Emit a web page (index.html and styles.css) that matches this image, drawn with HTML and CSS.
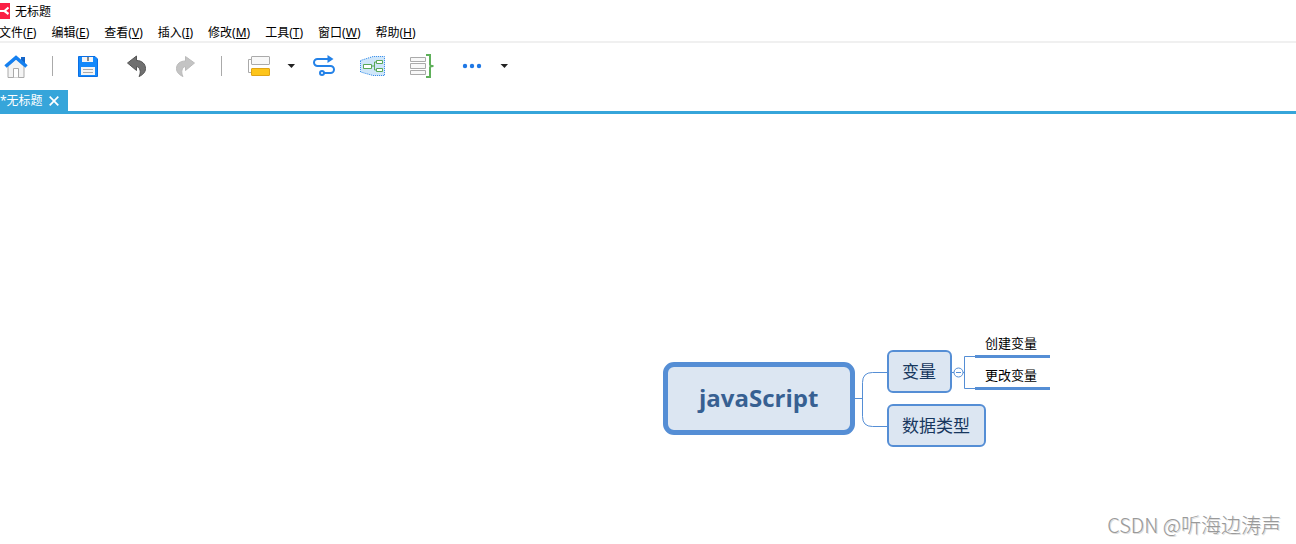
FILE: index.html
```html
<!DOCTYPE html>
<html lang="zh-CN">
<head>
<meta charset="utf-8">
<title>无标题</title>
<link rel="stylesheet" href="styles.css">
</head>
<body>
<header class="titlebar">
  <svg class="app-icon" width="10" height="16" viewBox="0 0 10 16" aria-hidden="true">
    <rect width="10" height="16" fill="#fb1f45"/>
    <path d="M0 8H4.500L8.500 4.500M4.500 8L8.500 11" fill="none" stroke="#fff" stroke-width="2.200"/>
  </svg>
  <h1 class="title">无标题</h1>
</header>
<nav class="menubar">
  <button class="menu">文件(<u>F</u>)</button>
  <button class="menu">编辑(<u>E</u>)</button>
  <button class="menu">查看(<u>V</u>)</button>
  <button class="menu">插入(<u>I</u>)</button>
  <button class="menu">修改(<u>M</u>)</button>
  <button class="menu">工具(<u>T</u>)</button>
  <button class="menu">窗口(<u>W</u>)</button>
  <button class="menu">帮助(<u>H</u>)</button>
</nav>
<div class="toolbar">
  <button class="tool" aria-label="主页">
    <svg width="24" height="24" viewBox="0 0 24 24">
      <path d="M4 12v11.500h16V12L12 5z" fill="#f4f4f4" stroke="#aaa"/>
      <path d="M9.500 23.500v-9h5v9" fill="#fff" stroke="#aaa"/>
      <path d="M17 3h4v7l-4-4z" fill="#1565c8"/>
      <path d="M1.500 12.500L12 3.500l10.500 9" fill="none" stroke="#1580f0" stroke-width="3.600"/>
    </svg>
  </button>
  <span class="divider"></span>
  <button class="tool" aria-label="保存">
    <svg width="24" height="24" viewBox="0 0 24 24">
      <path d="M1.500 2.500h16.500l2.500 2.500v17.500h-19z" fill="#1489fb" stroke="#0b6fe4"/>
      <path d="M5 3h11v5H5zM4 13h14v8H4z" fill="#f5f5f5"/>
      <path d="M10 3h2v4h-2z" fill="#888"/>
      <path d="M6 15.500h10M6 18.500h10" stroke="#aaa"/>
    </svg>
  </button>
  <button class="tool" aria-label="撤销">
    <svg width="24" height="24" viewBox="0 0 24 24">
      <path d="M2.500 9L11.500 2v4.500C17 6.500 20.500 10 20.500 14.500c0 4-3 6.500-6.500 8C16.500 18 15 13 11.500 12.500V16.500z" fill="#707070" stroke="#555"/>
    </svg>
  </button>
  <button class="tool" aria-label="重做">
    <svg width="24" height="24" viewBox="0 0 24 24">
      <path d="M21.500 9L12.500 2.500v4.500C7 7 3.500 10 3.500 14.500c0 4 3 6.500 6.500 8C7.500 18 9 13 12.500 12.500V16.500z" fill="#c4c4c4" stroke="#bbb"/>
    </svg>
  </button>
  <span class="divider"></span>
  <button class="tool" aria-label="子主题">
    <svg width="24" height="24" viewBox="0 0 24 24">
      <path d="M5 5.500H2.500v13H5" fill="none" stroke="#aaa"/>
      <rect x="5.500" y="2.500" width="18" height="8" rx=".5" fill="#f8f8f8" stroke="#aaa"/>
      <rect x="5.500" y="14.500" width="18" height="7" rx=".5" fill="#fdc51b" stroke="#e0a414"/>
    </svg>
  </button>
  <button class="tool drop" aria-label="更多主题">
    <svg width="10" height="24" viewBox="0 0 10 24"><path d="M1.500 10h7.500L5.500 14z" fill="#222"/></svg>
  </button>
  <button class="tool drop" aria-label="联系">
    <svg width="24" height="24" viewBox="0 0 24 24">
      <path d="M17 5H5.500a3.500 3.500 0 0 0 0 7H18.500a3.500 3.500 0 0 1 0 7H12" fill="none" stroke="#2482e8" stroke-width="2"/>
      <path d="M15.500 1l6 4-6 4z" fill="#2482e8"/>
      <circle cx="10" cy="19" r="2" fill="#fff" stroke="#2482e8" stroke-width="2"/>
    </svg>
  </button>
  <button class="tool" aria-label="外框">
    <svg width="26" height="24" viewBox="0 0 26 24">
      <path d="M.5 6.500L13 2.500h11.500v19H13L.5 18z" fill="#cfe6f9" stroke="#2482e8" stroke-dasharray="1 1"/>
      <path d="M11.500 12h3M14.500 12V8h2M14.500 12v4h2" fill="none" stroke="#58a957"/>
      <path d="M3.500 10.500h8v4h-8zM16.500 6.500h6v3h-6zM16.500 14.500h6v3h-6z" fill="#fff" stroke="#58a957"/>
    </svg>
  </button>
  <button class="tool" aria-label="概要">
    <svg width="24" height="24" viewBox="0 0 24 24">
      <path d="M.5 3.500h15v4H.5zM.5 9.500h15v5H.5zM.5 16.500h15v4H.5z" fill="#f8f8f8" stroke="#aaa"/>
      <path d="M16 1h4v9.500q0 1.500 3.500 1.500-3.500 0-3.500 1.500V23h-4" fill="none" stroke="#5fb05a" stroke-width="2"/>
    </svg>
  </button>
  <button class="tool" aria-label="更多">
    <svg width="26" height="24" viewBox="0 0 26 24"><g fill="#1f78e5"><circle cx="7" cy="12" r="2.200"/><circle cx="14" cy="12" r="2.200"/><circle cx="21" cy="12" r="2.200"/></g></svg>
  </button>
  <button class="tool drop" aria-label="展开更多">
    <svg width="10" height="24" viewBox="0 0 10 24"><path d="M.5 10h7.500L4.500 14z" fill="#222"/></svg>
  </button>
</div>
<div class="tabs">
  <div class="tab">
    <span>*无标题</span>
    <button class="close" aria-label="关闭">
      <svg width="10" height="10" viewBox="0 0 10 10"><path d="M.7.7l8.600 8.600M9.300.7L.7 9.300" stroke="#fff" stroke-width="1.700"/></svg>
    </button>
  </div>
</div>
<main class="canvas">
  <div class="map">
    <svg class="links" width="387" height="120" viewBox="0 0 387 120" fill="none" stroke="#558ed5" aria-hidden="true">
      <path d="M190 62.500h9.500M225 36.500h-15.500q-10 0-10 10v34q0 10 10 10H225"/>
      <path d="M288 36.500h13M312 20.500h-10.500v32H312"/>
      <circle cx="295.500" cy="36.500" r="4.500" fill="#fff"/>
      <path d="M293 36.500h5"/>
    </svg>
    <div class="node root">javaScript</div>
    <div class="node variable">变量</div>
    <div class="node types">数据类型</div>
    <div class="leaf create">创建变量</div>
    <div class="leaf change">更改变量</div>
  </div>
  <div class="watermark">CSDN @听海边涛声</div>
</main>
</body>
</html>
```
FILE: styles.css
```css
* {
  box-sizing: border-box;
}

body {
  margin: 0;
  min-height: 100vh;
  display: flex;
  flex-direction: column;
  background: #fff;
  color: #000;
  font: 12px/16px "Noto Sans", "Noto Sans CJK SC", sans-serif;
}

button {
  border: 0;
  padding: 0;
  background: none;
  color: inherit;
  font: inherit;
}

svg {
  display: block;
}

.titlebar {
  display: flex;
  gap: 5px;
  padding: 3px 0;
}

.title {
  margin: 0;
  font-size: 12px;
  font-weight: 400;
  line-height: 18px;
  height: 16px;
}

.menubar {
  display: flex;
  gap: 15px;
  height: 21px;
  padding-top: 3px;
  margin-left: -1px;
  border-bottom: 2px solid #f0f0f0;
  white-space: nowrap;
}

.menu {
  height: 16px;
}

.toolbar {
  display: flex;
  align-items: center;
  gap: 24px;
  height: 47px;
  padding: 0 4px 2px;
}

.drop {
  margin-left: -8px;
}

.divider {
  width: 1px;
  height: 20px;
  background: #aaa;
}

.tabs {
  display: flex;
  border-bottom: 3px solid #36a5da;
}

.tab {
  display: flex;
  align-items: center;
  gap: 6px;
  height: 21px;
  padding: 0 9px 0 0;
  background: #36a5da;
  color: #fff;
}

.canvas {
  position: relative;
  flex: 1;
}

.map {
  position: absolute;
  left: 663px;
  top: 222px;
}

.links {
  position: absolute;
  left: 0;
  top: 0;
}

.node {
  position: absolute;
  border: 2px solid #558ed5;
  border-radius: 6px;
  padding: 0 14px 0 13px;
  background: #dce6f2;
  color: #17375e;
  font-size: 17px;
  line-height: 39px;
  white-space: nowrap;
}

.root {
  left: 0;
  top: 26px;
  border-width: 5px;
  border-radius: 11px;
  padding: 0 32px 2px 31px;
  color: #376092;
  font-family: "Open Sans", sans-serif;
  font-size: 24px;
  font-weight: 700;
  line-height: 61px;
}

.variable {
  left: 224px;
  top: 14px;
}

.types {
  left: 224px;
  top: 68px;
}

.leaf {
  position: absolute;
  left: 312px;
  padding: 0 13px 3px 10px;
  border-bottom: 3px solid #558ed5;
  font-size: 13px;
  line-height: 18px;
  white-space: nowrap;
}

.create {
  top: -2px;
}

.change {
  top: 30px;
}

.watermark {
  position: absolute;
  right: 15px;
  bottom: 7px;
  color: #999;
  font-family: "Noto Sans CJK SC", sans-serif;
  font-size: 20px;
  font-weight: 300;
  line-height: 24px;
  text-shadow: 1px 1px 0 #ddd;
}
```
